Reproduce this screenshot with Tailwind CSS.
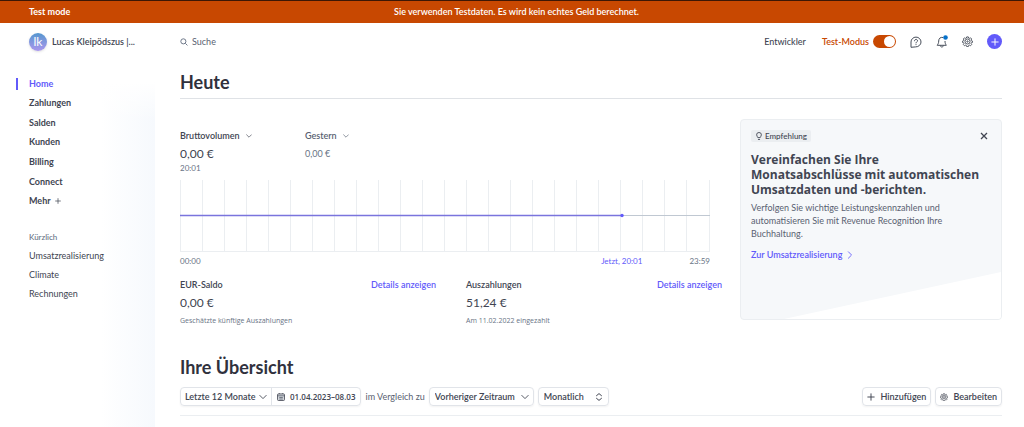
<!DOCTYPE html>
<html lang="de">
<head>
<meta charset="utf-8">
<meta name="viewport" content="width=device-width, initial-scale=1">
<title>Dashboard</title>
<script src="https://cdn.jsdelivr.net/npm/@tailwindcss/browser@4"></script>
</head>
<body class="min-h-screen flex flex-col bg-white font-['Lato','Open_Sans',sans-serif] text-[9px] leading-3 text-[#414552]">
<svg class="hidden">
  <symbol id="down" viewBox="0 0 10 10"><path d="M1 3l4 4 4-4" fill="none" stroke="currentColor" stroke-width="1.1" stroke-linecap="round" stroke-linejoin="round"/></symbol>
  <symbol id="plus" viewBox="0 0 10 10"><path d="M5 1v8M1 5h8" fill="none" stroke="currentColor" stroke-width="1.2" stroke-linecap="round"/></symbol>
  <symbol id="gear" viewBox="0 0 24 24"><g fill="none" stroke="currentColor" stroke-width="2"><path d="M10.2 2h3.6l.7 2.6 1.6.7 2.4-1.4 2.6 2.6-1.4 2.4.7 1.6 2.6.7v2.8l-2.6.7-.7 1.6 1.4 2.4-2.6 2.6-2.4-1.4-1.6.7-.7 2.6h-3.6l-.7-2.6-1.6-.7-2.4 1.4-2.6-2.6 1.4-2.4-.7-1.6-2.6-.7v-2.8l2.6-.7.7-1.6-1.4-2.4 2.6-2.6 2.4 1.4 1.6-.7z" stroke-linejoin="round"/><circle cx="12" cy="12" r="5.5"/><circle cx="12" cy="12" r="1.5"/></g></symbol>
</svg>

<div class="h-[23px] shrink-0 grid grid-cols-[1fr_auto_1fr] items-center border-t border-[#3d1705] bg-[#c84801] text-white pl-[29px] pr-5">
  <strong class="font-bold">Test mode</strong>
  <span class="font-semibold">Sie verwenden Testdaten. Es wird kein echtes Geld berechnet.</span>
</div>

<div class="flex-1 flex">
  <aside class="w-[155px] shrink-0 flex flex-col">
    <button type="button" class="h-[37px] shrink-0 pl-[29px] flex items-center gap-[5px] font-semibold whitespace-nowrap">
      <span class="size-[18px] rounded-full bg-linear-to-b from-[#5296cf] to-[#a896ed] text-white text-[12px] leading-[18px] font-normal shadow-sm">lk</span>
      <span>Lucas Kleipödszus |...</span>
    </button>
    <div class="flex-1 pt-[14px] bg-[linear-gradient(to_bottom,#fff_22px,#fff0_60px),linear-gradient(to_right,#fff_65%,#f6f9fd)]">
      <nav class="h-[137px] grid auto-rows-fr items-center font-bold" aria-label="Hauptmenü">
        <a href="#" aria-current="page" class="flex items-center text-[#625afa]"><span class="ml-4 mr-[11px] w-[2px] h-3 bg-[#625afa]"></span>Home</a>
        <a href="#" class="pl-[29px]">Zahlungen</a>
        <a href="#" class="pl-[29px]">Salden</a>
        <a href="#" class="pl-[29px]">Kunden</a>
        <a href="#" class="pl-[29px]">Billing</a>
        <a href="#" class="pl-[29px]">Connect</a>
        <a href="#" class="pl-[29px] flex items-center gap-1">Mehr <svg class="size-[6px]"><use href="#plus"/></svg></a>
      </nav>
      <nav class="mt-5 pl-[29px] flex flex-col gap-[7px]" aria-labelledby="recent">
        <h2 id="recent" class="text-[8px] font-medium text-[#687385]">Kürzlich</h2>
        <a href="#">Umsatzrealisierung</a>
        <a href="#">Climate</a>
        <a href="#">Rechnungen</a>
      </nav>
    </div>
  </aside>

  <div class="flex-1 min-w-0 pl-[25px] pr-[22px]">
    <header class="h-[37px] flex items-center">
      <label class="flex items-center gap-1">
        <svg class="size-[8px] text-[#687385]" viewBox="0 0 10 10" fill="none" stroke="currentColor" stroke-width="1.2"><circle cx="4.2" cy="4.2" r="3.2"/><path d="M6.7 6.7L9.3 9.3"/></svg>
        <input type="text" placeholder="Suche" aria-label="Suche" class="w-40 outline-none placeholder:text-[#596171]">
      </label>
      <a href="#" class="ml-auto font-medium">Entwickler</a>
      <label class="ml-4 flex items-center gap-1 font-semibold text-[#c84801]">Test-Modus
        <span class="grid items-center">
          <input type="checkbox" role="switch" checked class="peer col-start-1 row-start-1 appearance-none w-[23px] h-[13px] rounded-full bg-[#a8b0bc] checked:bg-[#c84801]">
          <span class="col-start-1 row-start-1 size-[11px] ml-px rounded-full bg-white peer-checked:ml-[11px]"></span>
        </span>
      </label>
      <div class="ml-[14px] flex items-center gap-[14px] text-[#474e5a]">
        <button type="button" aria-label="Hilfe"><svg class="size-3" viewBox="0 0 12 12" fill="none" stroke="currentColor" stroke-linecap="round" stroke-linejoin="round"><path d="M1 10.9V6a5 4.9 0 1 1 5 4.9z"/><path d="M4.5 4.8c0-2 3-2 3 0 0 1.2-1.5 1-1.5 2.1M6 8.6v.1"/></svg></button>
        <button type="button" aria-label="Mitteilungen"><svg class="size-3 overflow-visible" viewBox="0 0 12 12" fill="none" stroke="currentColor" stroke-linejoin="round"><path d="M7 1.5C4.5.8 2.7 2.5 2.7 5c0 2-.5 2.8-1.5 4.3h9.1C9.5 8 9 7 9 5M4.300 9.500c.2 2 2.900 2 3.100 0"/><circle cx="9.500" cy="1.500" r="2.300" fill="#0570c9" stroke="none"/></svg></button>
        <button type="button" aria-label="Einstellungen"><svg class="size-[11px]"><use href="#gear"/></svg></button>
        <button type="button" aria-label="Erstellen" class="size-[15px] grid place-items-center rounded-full bg-[#625afa] text-white"><svg class="size-2"><use href="#plus"/></svg></button>
      </div>
    </header>

    <main>
      <h1 class="h-[39px] pt-[10px] border-b border-[#dfe2e6] text-[18px] leading-6 font-bold text-[#30313d]">Heute</h1>

      <div class="mt-5 flex gap-[18px] items-start">
        <section class="flex-1 min-w-0 pt-[11px]">
          <div class="mr-3">
            <div class="flex">
              <div class="w-[125px]">
                <button type="button" class="flex items-center gap-[6px] font-semibold">Bruttovolumen <svg class="size-[6px]"><use href="#down"/></svg></button>
                <p class="mt-1 text-[12px] leading-4">0,00 €</p>
              </div>
              <div>
                <button type="button" class="flex items-center gap-[6px] font-semibold text-[#596171]">Gestern <svg class="size-[6px]"><use href="#down"/></svg></button>
                <p class="mt-1 leading-4 text-[#687385]">0,00 €</p>
              </div>
            </div>
            <p class="text-[8px] text-[#687385]">20:01</p>
            <div class="mt-[6px] h-[72px] grid">
              <div class="col-start-1 row-start-1 border-x border-b border-[#ebeef1] grid grid-cols-24 divide-x divide-[#ebeef1]">
                <i></i><i></i><i></i><i></i><i></i><i></i><i></i><i></i><i></i><i></i><i></i><i></i><i></i><i></i><i></i><i></i><i></i><i></i><i></i><i></i><i></i><i></i><i></i><i></i>
              </div>
              <svg class="col-start-1 row-start-1 w-full h-[72px]" role="img" aria-label="Bruttovolumen im Tagesverlauf">
                <line x1="83.4%" y1="35.5" x2="100%" y2="35.5" stroke="#c0c8d2"/>
                <line x1="0" y1="35.5" x2="83.4%" y2="35.5" stroke="#7a74dd" stroke-width="1.5"/>
                <circle cx="83.4%" cy="35.5" r="1.7" fill="#625afa"/>
              </svg>
            </div>
            <div class="mt-[3px] grid grid-cols-[667fr_333fr] text-[8px] text-[#687385]">
              <span>00:00</span>
              <span class="flex justify-between"><span class="w-full text-center text-[#625afa]">Jetzt, 20:01</span><span class="w-0 flex justify-end">23:59</span></span>
            </div>
          </div>
          <div class="mt-3 grid grid-cols-2 gap-[30px]">
            <div>
              <div class="flex justify-between font-semibold"><h2>EUR-Saldo</h2><a href="#" class="text-[#625afa]">Details anzeigen</a></div>
              <p class="mt-1 text-[12px] leading-4">0,00 €</p>
              <p class="mt-1 font-['Open_Sans',sans-serif] text-[7px] text-[#687385]">Geschätzte künftige Auszahlungen</p>
            </div>
            <div>
              <div class="flex justify-between font-semibold"><h2>Auszahlungen</h2><a href="#" class="text-[#625afa]">Details anzeigen</a></div>
              <p class="mt-1 text-[12px] leading-4">51,24 €</p>
              <p class="mt-1 font-['Open_Sans',sans-serif] text-[7px] text-[#687385]">Am 11.02.2022 eingezahlt</p>
            </div>
          </div>
        </section>

        <section class="w-[262px] shrink-0 rounded border border-[#ebeef1] bg-[#f6f8fa] overflow-hidden">
          <div class="px-[10px] pt-[10px]">
            <div class="flex items-center justify-between">
              <span class="h-3 px-1 flex items-center gap-[2px] rounded-xs bg-[#ebeef1] text-[8px] font-medium"><svg class="size-2" viewBox="0 0 10 10" fill="none" stroke="currentColor" stroke-width="1.1"><path d="M3.5 7C3.5 5.8 2 5.3 2 3.6a3 3 0 0 1 6 0C8 5.3 6.5 5.8 6.5 7zM3.7 9.3h2.6"/></svg>Empfehlung</span>
              <button type="button" aria-label="Schließen" class="mr-[3px]"><svg class="size-2" viewBox="0 0 8 8" stroke="currentColor" stroke-width="1.3"><path d="M1 1l6 6M7 1L1 7"/></svg></button>
            </div>
            <h2 class="mt-[10px] font-['Open_Sans',sans-serif] text-[12px] leading-[15px] font-bold">Vereinfachen Sie Ihre Monatsabschlüsse mit automatischen Umsatzdaten und -berichten.</h2>
            <p class="mt-1 mr-9 leading-[13px] text-[#596171]">Verfolgen Sie wichtige Leistungskennzahlen und automatisieren Sie mit Revenue Recognition Ihre Buchhaltung.</p>
            <a href="#" class="mt-[9px] inline-flex items-center gap-1 font-semibold text-[#625afa]">Zur Umsatzrealisierung <svg class="size-2 -rotate-90"><use href="#down"/></svg></a>
          </div>
          <svg class="mt-[10px] block w-full h-[48px]" viewBox="0 0 260 48" preserveAspectRatio="none"><path d="M43 48L260 1v47z" fill="#fff"/></svg>
        </section>
      </div>

      <h1 class="mt-7 text-[18px] leading-6 font-bold text-[#30313d]">Ihre Übersicht</h1>
      <div class="mt-2 pb-[9px] flex items-center border-b border-[#ebeef1] whitespace-nowrap font-semibold">
        <div class="h-[19px] flex rounded border border-[#e1e4e9] shadow-xs">
          <span class="grid items-center w-[91px] border-r border-[#e1e4e9]">
            <select aria-label="Zeitraum" class="col-start-1 row-start-1 h-full appearance-none pl-1 pr-3"><option>Letzte 12 Monate</option></select>
            <svg class="col-start-1 row-start-1 justify-self-end mr-1 size-2 pointer-events-none"><use href="#down"/></svg>
          </span>
          <button type="button" class="px-[5px] flex items-center gap-[5px]"><svg class="size-2" viewBox="0 0 8 8"><path d="M.5 2.8h7M2.3 0v1M5.7 0v1M2.3 4.5h3.5M2.3 6h3.5" stroke="currentColor" stroke-width=".7"/><rect x=".5" y=".9" width="7" height="6.6" rx="1" fill="#687385" fill-opacity=".3" stroke="currentColor" stroke-width=".8"/></svg><span class="font-['Open_Sans',sans-serif] text-[8px]">01.04.2023–08.03</span></button>
        </div>
        <span class="mx-1 font-normal text-[#596171]">im Vergleich zu</span>
        <span class="grid items-center w-[105px] h-[19px] rounded border border-[#e1e4e9] shadow-xs">
          <select aria-label="Vergleichszeitraum" class="col-start-1 row-start-1 h-full appearance-none pl-[5px] pr-3"><option>Vorheriger Zeitraum</option></select>
          <svg class="col-start-1 row-start-1 justify-self-end mr-1 size-2 pointer-events-none"><use href="#down"/></svg>
        </span>
        <span class="ml-1 grid items-center w-[71px] h-[19px] rounded border border-[#e1e4e9] shadow-xs">
          <select aria-label="Intervall" class="col-start-1 row-start-1 h-full appearance-none pl-[5px] pr-3"><option>Monatlich</option></select>
          <svg class="col-start-1 row-start-1 justify-self-end mr-[5px] size-2 pointer-events-none" viewBox="0 0 8 8" fill="none" stroke="currentColor" stroke-linecap="round" stroke-linejoin="round"><path d="M1.5 2.7L4 .6l2.5 2.1M1.5 5.3L4 7.4l2.5-2.1"/></svg>
        </span>
        <button type="button" class="ml-auto h-[19px] px-1 flex items-center gap-[5px] rounded border border-[#e1e4e9] shadow-xs"><svg class="size-2"><use href="#plus"/></svg>Hinzufügen</button>
        <button type="button" class="ml-1 h-[19px] px-1 flex items-center gap-[5px] rounded border border-[#e1e4e9] shadow-xs"><svg class="size-2"><use href="#gear"/></svg>Bearbeiten</button>
      </div>
    </main>
  </div>
</div>
</body>
</html>
